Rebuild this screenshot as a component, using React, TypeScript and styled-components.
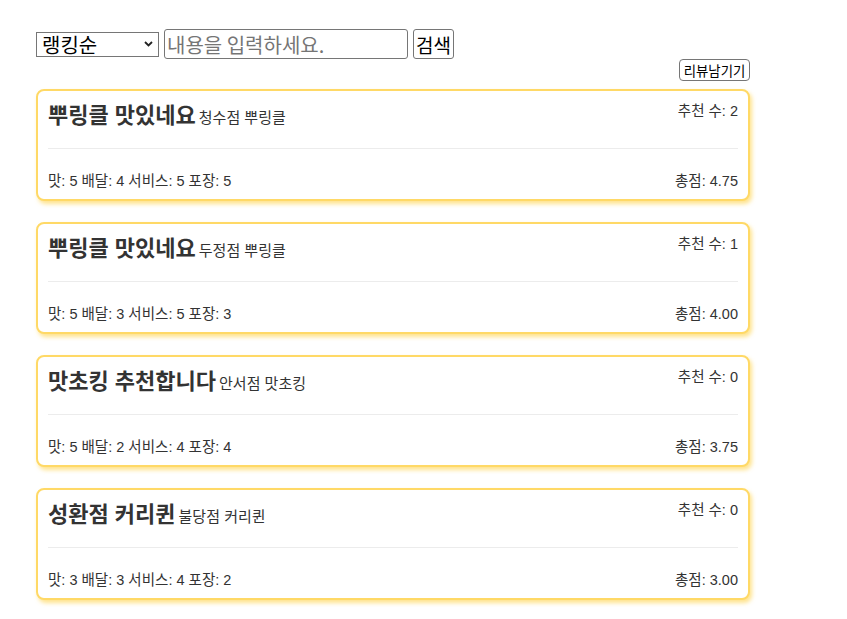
import React from "react";
import styled, { createGlobalStyle } from "styled-components";

const GlobalStyle = createGlobalStyle`
  html, body {
    margin: 0;
    padding: 0;
    background: #ffffff;
  }
  body {
    font-family: "Liberation Sans", "Noto Sans CJK KR", sans-serif;
    color: #333333;
  }
`;

const Page = styled.div`
  width: 714px;
  padding: 29px 0 20px 36px;
`;

const SearchBar = styled.form`
  display: flex;
  align-items: center;
  gap: 5px;
  height: 30px;
  margin: 0;
`;

const SelectWrap = styled.div`
  position: relative;
  width: 123px;
  height: 25px;
`;

const SortSelect = styled.select`
  appearance: none;
  -webkit-appearance: none;
  box-sizing: border-box;
  display: block;
  width: 123px;
  height: 25px;
  font-family: "Noto Sans CJK KR", sans-serif;
  font-size: 20px;
  line-height: 23px;
  padding: 0 20px 0 5px;
  border: 1px solid #767676;
  border-radius: 0;
  background: #ffffff;
  color: #000000;
  overflow: hidden;
`;

const Chevron = styled.svg`
  position: absolute;
  right: 6px;
  top: 9px;
  width: 9px;
  height: 6px;
  pointer-events: none;
`;

const SearchInput = styled.input`
  box-sizing: border-box;
  width: 244px;
  height: 30px;
  font-family: "Noto Sans CJK KR", sans-serif;
  font-size: 20px;
  padding: 0 2px;
  border: 1px solid #767676;
  border-radius: 3px;
  background: #ffffff;
  &::placeholder {
    color: #757575;
  }
`;

const SearchButton = styled.button`
  box-sizing: border-box;
  width: 41px;
  height: 30px;
  font-family: "Noto Sans CJK KR", sans-serif;
  font-size: 19px;
  padding: 0;
  border: 1px solid #767676;
  border-radius: 3px;
  background: #ffffff;
  color: #000000;
`;

const ActionRow = styled.div`
  display: flex;
  justify-content: flex-end;
`;

const ReviewButton = styled.button`
  box-sizing: border-box;
  width: 71px;
  height: 22px;
  font-family: "Noto Sans CJK KR", sans-serif;
  font-size: 13.4px;
  line-height: 18px;
  padding: 0;
  border: 1px solid #767676;
  border-radius: 4px;
  background: #ffffff;
  color: #000000;
`;

const CardList = styled.div`
  display: flex;
  flex-direction: column;
  gap: 21px;
  margin-top: 8px;
`;

const Card = styled.div`
  box-sizing: border-box;
  height: 112px;
  display: flex;
  flex-direction: column;
  padding: 10px;
  border: 2px solid #ffd966;
  border-radius: 8px;
  background: #ffffff;
  box-shadow: 2px 3px 4px rgba(255, 217, 102, 0.75);
`;

const CardHeader = styled.div`
  display: flex;
  justify-content: space-between;
  align-items: flex-start;
  height: 40px;
`;

const Title = styled.div`
  font-size: 22px;
  font-weight: 700;
  line-height: 30px;
  color: #333333;
`;

const Store = styled.span`
  font-size: 15px;
  font-weight: 400;
  margin-left: 3px;
`;

const Meta = styled.div`
  font-size: 14.5px;
  line-height: 16px;
  margin-top: 2px;
`;

const Divider = styled.div`
  height: 1px;
  background: #ececec;
  margin-top: 7px;
`;

const CardFooter = styled.div`
  flex: 1;
  display: flex;
  justify-content: space-between;
  align-items: flex-end;
  font-size: 14.5px;
  line-height: 16px;
`;

type Review = {
  title: string;
  store: string;
  likes: number;
  taste: number;
  delivery: number;
  service: number;
  pack: number;
  total: string;
};

const reviews: Review[] = [
  { title: "뿌링클 맛있네요", store: "청수점 뿌링클", likes: 2, taste: 5, delivery: 4, service: 5, pack: 5, total: "4.75" },
  { title: "뿌링클 맛있네요", store: "두정점 뿌링클", likes: 1, taste: 5, delivery: 3, service: 5, pack: 3, total: "4.00" },
  { title: "맛초킹 추천합니다", store: "안서점 맛초킹", likes: 0, taste: 5, delivery: 2, service: 4, pack: 4, total: "3.75" },
  { title: "성환점 커리퀸", store: "불당점 커리퀸", likes: 0, taste: 3, delivery: 3, service: 4, pack: 2, total: "3.00" },
];

export default function App() {
  return (
    <>
      <GlobalStyle />
      <Page>
        <SearchBar onSubmit={(e) => e.preventDefault()}>
          <SelectWrap>
            <SortSelect defaultValue="rank">
              <option value="rank">랭킹순</option>
              <option value="recent">최신순</option>
            </SortSelect>
            <Chevron viewBox="0 0 9 6">
              <path d="M1 1 L4.5 4.5 L8 1" fill="none" stroke="#222" strokeWidth="1.8" />
            </Chevron>
          </SelectWrap>
          <SearchInput placeholder="내용을 입력하세요." />
          <SearchButton type="submit">검색</SearchButton>
        </SearchBar>
        <ActionRow>
          <ReviewButton type="button">리뷰남기기</ReviewButton>
        </ActionRow>
        <CardList>
          {reviews.map((r, i) => (
            <Card key={i}>
              <CardHeader>
                <Title>
                  {r.title}
                  <Store>{r.store}</Store>
                </Title>
                <Meta>추천 수: {r.likes}</Meta>
              </CardHeader>
              <Divider />
              <CardFooter>
                <span>
                  맛: {r.taste} 배달: {r.delivery} 서비스: {r.service} 포장: {r.pack}
                </span>
                <span>총점: {r.total}</span>
              </CardFooter>
            </Card>
          ))}
        </CardList>
      </Page>
    </>
  );
}
